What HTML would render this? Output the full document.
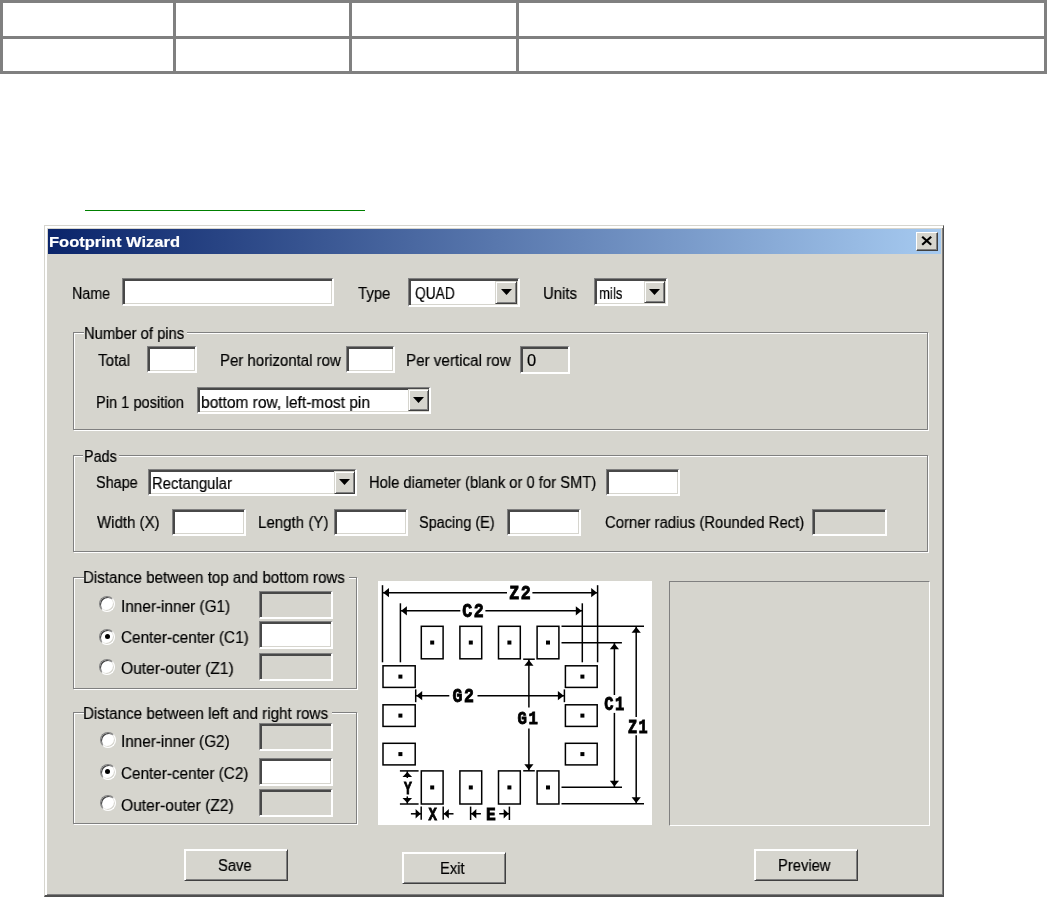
<!DOCTYPE html>
<html><head><meta charset="utf-8"><style>
html,body{margin:0;padding:0;background:#fff;width:1047px;height:897px;overflow:hidden;position:relative}
body>div,body>svg{position:absolute;box-sizing:border-box}
.frame{background:#d6d5ce;border-style:solid;border-width:1px 1px 2px 1px;border-color:#d6d5ce #505050 #505050 #d6d5ce;box-shadow:inset 2px 2px 0 #fff,inset -1px -1px 0 #808080}
.title{background:linear-gradient(to right,#0a246a,#a6caf0)}
.cbtn{background:#d6d5ce;border-style:solid;border-width:1px;border-color:#fff #404040 #404040 #fff;box-shadow:inset -1px -1px 0 #808080}
.edit{border-style:solid;border-width:1px 2px 2px 1px;border-color:#808080 #fff #fff #808080;box-shadow:inset 2px 2px 0 #484848,inset -1px -1px 0 #d6d5ce}
.dbtn{background:#d6d5ce;border-style:solid;border-width:1px;border-color:#d6d5ce #404040 #404040 #d6d5ce;box-shadow:inset 1px 1px 0 #fff,inset -1px -1px 0 #808080}
.grp{border:1px solid #808080;box-shadow:1px 1px 0 #fff,inset 1px 1px 0 #fff}
.btn{background:#d6d5ce;border-style:solid;border-width:1px;border-color:#fff #404040 #404040 #fff;box-shadow:inset 1px 1px 0 #fff,inset -1px -1px 0 #808080}
.panel{border-style:solid;border-width:1px;border-color:#808080 #fff #fff #808080}
.radio{width:16px;height:16px;border-radius:50%;background:#fff;border:1px solid;border-color:#808080 #fff #fff #808080;box-shadow:inset 1px 1px 0 #404040,inset -1px -1px 0 #d6d5ce}
.lbl{will-change:transform;-webkit-text-stroke:0.2px currentColor;font-family:"Liberation Sans",sans-serif;line-height:18px;white-space:nowrap;transform-origin:0 0}
</style></head><body>
<div style="left:0px;top:0px;width:1047px;height:3px;background:#808080"></div>
<div style="left:0px;top:71px;width:1047px;height:3px;background:#808080"></div>
<div style="left:0px;top:36px;width:1047px;height:3px;background:#808080"></div>
<div style="left:0px;top:0px;width:3px;height:74px;background:#808080"></div>
<div style="left:173px;top:0px;width:3px;height:74px;background:#808080"></div>
<div style="left:349px;top:0px;width:3px;height:74px;background:#808080"></div>
<div style="left:516px;top:0px;width:3px;height:74px;background:#808080"></div>
<div style="left:1044px;top:0px;width:3px;height:74px;background:#808080"></div>
<div style="left:85px;top:210px;width:280px;height:1px;background:#008000"></div>
<div class="frame" style="left:44px;top:225px;width:900px;height:672px"></div>
<div class="title" style="left:48px;top:229px;width:893px;height:25px"></div>
<div class="cbtn" style="left:916px;top:232px;width:22px;height:19px"><svg width="22" height="19" viewBox="0 0 22 19" style="position:absolute;left:-2px;top:-2px"><path d="M7.2 5.7 L16.2 13.7 M16.2 5.7 L7.2 13.7" stroke="#000" stroke-width="2.2" fill="none"/></svg></div>
<div class="edit" style="left:122px;top:278px;width:212px;height:28px;background:#fff"></div>
<div class="edit" style="left:408px;top:278px;width:112px;height:29px;background:#fff"></div>
<div class="dbtn" style="left:495px;top:281px;width:22px;height:23px"></div>
<svg style="left:500.5px;top:289.3px" width="11" height="6" viewBox="0 0 11 6"><path d="M0 0 H11 L5.5 6 Z" fill="#000"/></svg>
<div class="edit" style="left:594px;top:278px;width:74px;height:28px;background:#fff"></div>
<div class="dbtn" style="left:644px;top:281px;width:21px;height:22px"></div>
<svg style="left:649.0px;top:288.8px" width="11" height="6" viewBox="0 0 11 6"><path d="M0 0 H11 L5.5 6 Z" fill="#000"/></svg>
<div class="grp" style="left:73px;top:332px;width:855px;height:98px"></div>
<div class="edit" style="left:147px;top:346px;width:50px;height:27px;background:#fff"></div>
<div class="edit" style="left:346px;top:346px;width:49px;height:27px;background:#fff"></div>
<div class="edit" style="left:520px;top:346px;width:50px;height:28px;background:#d6d5ce"></div>
<div class="edit" style="left:197px;top:387px;width:234px;height:27px;background:#fff"></div>
<div class="dbtn" style="left:408px;top:389px;width:21px;height:22px"></div>
<svg style="left:413.0px;top:396.8px" width="11" height="6" viewBox="0 0 11 6"><path d="M0 0 H11 L5.5 6 Z" fill="#000"/></svg>
<div class="grp" style="left:73px;top:455px;width:855px;height:97px"></div>
<div class="edit" style="left:148px;top:469px;width:209px;height:27px;background:#fff"></div>
<div class="dbtn" style="left:334px;top:471px;width:21px;height:23px"></div>
<svg style="left:339.0px;top:479.3px" width="11" height="6" viewBox="0 0 11 6"><path d="M0 0 H11 L5.5 6 Z" fill="#000"/></svg>
<div class="edit" style="left:606px;top:469px;width:74px;height:27px;background:#fff"></div>
<div class="edit" style="left:172px;top:509px;width:74px;height:27px;background:#fff"></div>
<div class="edit" style="left:334px;top:509px;width:74px;height:27px;background:#fff"></div>
<div class="edit" style="left:507px;top:509px;width:74px;height:27px;background:#fff"></div>
<div class="edit" style="left:812px;top:509px;width:75px;height:27px;background:#d6d5ce"></div>
<div class="grp" style="left:73px;top:577px;width:284px;height:112px"></div>
<div class="radio" style="left:99.3px;top:596.4px"></div>
<div class="radio" style="left:99.3px;top:628.8px"></div>
<div style="left:104.6px;top:634.1px;width:5.4px;height:5.4px;border-radius:50%;background:#000"></div>
<div class="radio" style="left:99.3px;top:659.4px"></div>
<div class="edit" style="left:259px;top:591px;width:74px;height:28px;background:#d6d5ce"></div>
<div class="edit" style="left:259px;top:621px;width:74px;height:28px;background:#fff"></div>
<div class="edit" style="left:259px;top:653px;width:74px;height:28px;background:#d6d5ce"></div>
<div class="grp" style="left:73px;top:712px;width:284px;height:112px"></div>
<div class="radio" style="left:99.5px;top:731.8px"></div>
<div class="radio" style="left:99.5px;top:763.5px"></div>
<div style="left:104.8px;top:768.8px;width:5.4px;height:5.4px;border-radius:50%;background:#000"></div>
<div class="radio" style="left:99.5px;top:795.3px"></div>
<div class="edit" style="left:259px;top:723px;width:74px;height:28px;background:#d6d5ce"></div>
<div class="edit" style="left:259px;top:758px;width:74px;height:28px;background:#fff"></div>
<div class="edit" style="left:259px;top:789px;width:74px;height:28px;background:#d6d5ce"></div>
<div class="panel" style="left:669px;top:581px;width:261px;height:245px"></div>
<div class="btn" style="left:184px;top:849px;width:104px;height:32px"></div>
<div class="btn" style="left:402px;top:852px;width:104px;height:32px"></div>
<div class="btn" style="left:754px;top:849px;width:104px;height:32px"></div>
<svg style="left:378px;top:581px;will-change:transform" width="274" height="244" viewBox="378 581 274 244">
<rect x="378" y="581" width="274" height="244" fill="#fff"/>
<g stroke="#000" stroke-width="1.5" fill="none">
<rect x="421.3" y="626.3" width="21.80" height="32.50" fill="none"/>
<rect x="430.20" y="640.55" width="4" height="4" fill="#000" stroke="none"/>
<rect x="421.3" y="770.9" width="21.80" height="33.10" fill="none"/>
<rect x="430.20" y="785.45" width="4" height="4" fill="#000" stroke="none"/>
<rect x="459.9" y="626.3" width="21.80" height="32.50" fill="none"/>
<rect x="468.80" y="640.55" width="4" height="4" fill="#000" stroke="none"/>
<rect x="459.9" y="770.9" width="21.80" height="33.10" fill="none"/>
<rect x="468.80" y="785.45" width="4" height="4" fill="#000" stroke="none"/>
<rect x="498.5" y="626.3" width="21.80" height="32.50" fill="none"/>
<rect x="507.40" y="640.55" width="4" height="4" fill="#000" stroke="none"/>
<rect x="498.5" y="770.9" width="21.80" height="33.10" fill="none"/>
<rect x="507.40" y="785.45" width="4" height="4" fill="#000" stroke="none"/>
<rect x="537.1" y="626.3" width="21.80" height="32.50" fill="none"/>
<rect x="546.00" y="640.55" width="4" height="4" fill="#000" stroke="none"/>
<rect x="537.1" y="770.9" width="21.80" height="33.10" fill="none"/>
<rect x="546.00" y="785.45" width="4" height="4" fill="#000" stroke="none"/>
<rect x="383.0" y="665.8" width="32.20" height="21.60" fill="none"/>
<rect x="398.40" y="674.60" width="4" height="4" fill="#000" stroke="none"/>
<rect x="565.4" y="665.8" width="31.80" height="21.60" fill="none"/>
<rect x="580.40" y="674.60" width="4" height="4" fill="#000" stroke="none"/>
<rect x="383.0" y="704.8" width="32.20" height="21.60" fill="none"/>
<rect x="398.40" y="713.60" width="4" height="4" fill="#000" stroke="none"/>
<rect x="565.4" y="704.8" width="31.80" height="21.60" fill="none"/>
<rect x="580.40" y="713.60" width="4" height="4" fill="#000" stroke="none"/>
<rect x="383.0" y="743.3" width="32.20" height="21.60" fill="none"/>
<rect x="398.40" y="752.10" width="4" height="4" fill="#000" stroke="none"/>
<rect x="565.4" y="743.3" width="31.80" height="21.60" fill="none"/>
<rect x="580.40" y="752.10" width="4" height="4" fill="#000" stroke="none"/>
<line x1="382.5" y1="585.2" x2="382.5" y2="662.3"/>
<line x1="597.6" y1="585.2" x2="597.6" y2="662.3"/>
<line x1="382.5" y1="592.7" x2="507" y2="592.7"/>
<line x1="532.4" y1="592.7" x2="597.6" y2="592.7"/>
<polygon points="383.20,592.70 389.00,588.10 389.00,597.30" fill="#000" stroke="none"/>
<polygon points="597.00,592.70 591.20,588.10 591.20,597.30" fill="#000" stroke="none"/>
<line x1="400.4" y1="603.3" x2="400.4" y2="662.3"/>
<line x1="582.3" y1="603.3" x2="582.3" y2="662.3"/>
<line x1="400.4" y1="610.8" x2="460.3" y2="610.8"/>
<line x1="485.4" y1="610.8" x2="582.3" y2="610.8"/>
<polygon points="401.10,610.80 406.90,606.20 406.90,615.40" fill="#000" stroke="none"/>
<polygon points="581.60,610.80 575.80,606.20 575.80,615.40" fill="#000" stroke="none"/>
<line x1="415.7" y1="689.4" x2="415.7" y2="702.2"/>
<line x1="564.4" y1="689.4" x2="564.4" y2="702.2"/>
<line x1="415.7" y1="695.7" x2="449.3" y2="695.7"/>
<line x1="477.5" y1="695.7" x2="564.4" y2="695.7"/>
<polygon points="416.40,695.70 422.20,691.10 422.20,700.30" fill="#000" stroke="none"/>
<polygon points="563.70,695.70 557.90,691.10 557.90,700.30" fill="#000" stroke="none"/>
<line x1="523.2" y1="659.2" x2="534.8" y2="659.2"/>
<line x1="523.2" y1="770.8" x2="534.8" y2="770.8"/>
<line x1="528.9" y1="659.2" x2="528.9" y2="707.4"/>
<line x1="528.9" y1="728.5" x2="528.9" y2="770.8"/>
<polygon points="528.90,659.90 524.30,665.70 533.50,665.70" fill="#000" stroke="none"/>
<polygon points="528.90,770.10 524.30,764.30 533.50,764.30" fill="#000" stroke="none"/>
<line x1="561.5" y1="642.8" x2="621.9" y2="642.8"/>
<line x1="561.5" y1="787.3" x2="622" y2="787.3"/>
<line x1="614.4" y1="642.8" x2="614.4" y2="695"/>
<line x1="614.4" y1="712.9" x2="614.4" y2="787.3"/>
<polygon points="614.40,643.50 609.80,649.30 619.00,649.30" fill="#000" stroke="none"/>
<polygon points="614.40,786.60 609.80,780.80 619.00,780.80" fill="#000" stroke="none"/>
<line x1="561.5" y1="626.3" x2="644" y2="626.3"/>
<line x1="561.5" y1="803.8" x2="644" y2="803.8"/>
<line x1="636.2" y1="626.3" x2="636.2" y2="717"/>
<line x1="636.2" y1="735.2" x2="636.2" y2="803.8"/>
<polygon points="636.20,627.00 631.60,632.80 640.80,632.80" fill="#000" stroke="none"/>
<polygon points="636.20,803.10 631.60,797.30 640.80,797.30" fill="#000" stroke="none"/>
<line x1="399.9" y1="770.9" x2="418.6" y2="770.9"/>
<line x1="399.9" y1="804.0" x2="418.6" y2="804.0"/>
<line x1="407.3" y1="771.2" x2="407.3" y2="778"/>
<line x1="407.3" y1="796.4" x2="407.3" y2="803.8"/>
<polygon points="407.30,771.90 402.50,776.90 412.10,776.90" fill="#000" stroke="none"/>
<polygon points="407.30,803.10 402.50,798.10 412.10,798.10" fill="#000" stroke="none"/>
<line x1="421.2" y1="806.4" x2="421.2" y2="819.7"/>
<line x1="443.2" y1="806.4" x2="443.2" y2="819.7"/>
<line x1="410.9" y1="813.8" x2="421.2" y2="813.8"/>
<line x1="443.2" y1="813.8" x2="453.5" y2="813.8"/>
<polygon points="420.60,813.80 415.60,809.10 415.60,818.50" fill="#000" stroke="none"/>
<polygon points="443.80,813.80 448.80,809.10 448.80,818.50" fill="#000" stroke="none"/>
<line x1="470.6" y1="806.6" x2="470.6" y2="820"/>
<line x1="509.4" y1="806.6" x2="509.4" y2="820"/>
<line x1="470.6" y1="813.75" x2="480.9" y2="813.75"/>
<line x1="499.2" y1="813.75" x2="509.4" y2="813.75"/>
<polygon points="471.30,813.75 476.30,808.95 476.30,818.55" fill="#000" stroke="none"/>
<polygon points="508.70,813.75 503.70,808.95 503.70,818.55" fill="#000" stroke="none"/>
</g>
<g fill="#000" stroke="#000" stroke-width="0.9" font-family="Liberation Mono" font-weight="bold">
<text transform="translate(509.17,599.20) scale(0.8292,1.0000)" x="0" y="0" font-size="20" letter-spacing="2">Z2</text>
<text transform="translate(462.27,617.20) scale(0.8292,0.9769)" x="0" y="0" font-size="20" letter-spacing="2">C2</text>
<text transform="translate(452.57,702.20) scale(0.8250,0.9923)" x="0" y="0" font-size="20" letter-spacing="2">G2</text>
<text transform="translate(517.62,724.20) scale(0.7833,0.9231)" x="0" y="0" font-size="20" letter-spacing="2">G1</text>
<text transform="translate(604.23,710.30) scale(0.7708,0.9769)" x="0" y="0" font-size="20" letter-spacing="2">C1</text>
<text transform="translate(627.94,732.60) scale(0.7625,0.9769)" x="0" y="0" font-size="20" letter-spacing="2">Z1</text>
<text transform="translate(404.00,793.50) scale(0.6500,0.9462)" x="0" y="0" font-size="20" letter-spacing="0">Y</text>
<text transform="translate(428.60,819.70) scale(0.7000,0.9000)" x="0" y="0" font-size="20" letter-spacing="0">X</text>
<text transform="translate(486.09,820.00) scale(0.8100,0.9462)" x="0" y="0" font-size="20" letter-spacing="0">E</text>
</g></svg>
<div style="left:84px;top:329px;width:103px;height:6px;background:#d6d5ce"></div>
<div style="left:83px;top:452px;width:36px;height:6px;background:#d6d5ce"></div>
<div style="left:84px;top:574px;width:265px;height:6px;background:#d6d5ce"></div>
<div style="left:84px;top:709px;width:248px;height:6px;background:#d6d5ce"></div>
<div class="lbl" style="left:49.30px;top:233px;font-size:15px;font-weight:bold;color:#fff;transform:scaleX(1.1009)">Footprint Wizard</div>
<div class="lbl" style="left:71.51px;top:285px;font-size:16px;font-weight:normal;color:#000;transform:scaleX(0.8927)">Name</div>
<div class="lbl" style="left:358.40px;top:285px;font-size:16px;font-weight:normal;color:#000;transform:scaleX(0.9324)">Type</div>
<div class="lbl" style="left:543.07px;top:285px;font-size:16px;font-weight:normal;color:#000;transform:scaleX(0.9314)">Units</div>
<div class="lbl" style="left:415.24px;top:284.5px;font-size:16px;font-weight:normal;color:#000;transform:scaleX(0.8578)">QUAD</div>
<div class="lbl" style="left:598.68px;top:285px;font-size:16px;font-weight:normal;color:#000;transform:scaleX(0.8222)">mils</div>
<div class="lbl" style="left:83.58px;top:325px;font-size:16px;font-weight:normal;color:#000;transform:scaleX(0.9234)">Number of pins</div>
<div class="lbl" style="left:98.20px;top:351.5px;font-size:16px;font-weight:normal;color:#000;transform:scaleX(0.9515)">Total</div>
<div class="lbl" style="left:219.96px;top:351.5px;font-size:16px;font-weight:normal;color:#000;transform:scaleX(0.9359)">Per horizontal row</div>
<div class="lbl" style="left:406.05px;top:351.5px;font-size:16px;font-weight:normal;color:#000;transform:scaleX(0.9495)">Per vertical row</div>
<div class="lbl" style="left:526.87px;top:352px;font-size:16px;font-weight:normal;color:#000;transform:scaleX(1.0286)">0</div>
<div class="lbl" style="left:96.49px;top:393.5px;font-size:16px;font-weight:normal;color:#000;transform:scaleX(0.9138)">Pin 1 position</div>
<div class="lbl" style="left:200.93px;top:393.5px;font-size:16px;font-weight:normal;color:#000;transform:scaleX(0.9694)">bottom row, left-most pin</div>
<div class="lbl" style="left:83.50px;top:447.5px;font-size:16px;font-weight:normal;color:#000;transform:scaleX(0.9000)">Pads</div>
<div class="lbl" style="left:96.40px;top:474px;font-size:16px;font-weight:normal;color:#000;transform:scaleX(0.9022)">Shape</div>
<div class="lbl" style="left:151.57px;top:475px;font-size:16px;font-weight:normal;color:#000;transform:scaleX(0.9259)">Rectangular</div>
<div class="lbl" style="left:369.48px;top:474px;font-size:16px;font-weight:normal;color:#000;transform:scaleX(0.9224)">Hole diameter (blank or 0 for SMT)</div>
<div class="lbl" style="left:97.30px;top:514px;font-size:16px;font-weight:normal;color:#000;transform:scaleX(0.9394)">Width (X)</div>
<div class="lbl" style="left:257.76px;top:514px;font-size:16px;font-weight:normal;color:#000;transform:scaleX(0.9411)">Length (Y)</div>
<div class="lbl" style="left:419.10px;top:514px;font-size:16px;font-weight:normal;color:#000;transform:scaleX(0.9049)">Spacing (E)</div>
<div class="lbl" style="left:605.07px;top:514px;font-size:16px;font-weight:normal;color:#000;transform:scaleX(0.9296)">Corner radius (Rounded Rect)</div>
<div class="lbl" style="left:83.45px;top:568.5px;font-size:16px;font-weight:normal;color:#000;transform:scaleX(0.9469)">Distance between top and bottom rows</div>
<div class="lbl" style="left:120.84px;top:598px;font-size:16px;font-weight:normal;color:#000;transform:scaleX(0.9589)">Inner-inner (G1)</div>
<div class="lbl" style="left:120.84px;top:629px;font-size:16px;font-weight:normal;color:#000;transform:scaleX(0.9576)">Center-center (C1)</div>
<div class="lbl" style="left:120.82px;top:660px;font-size:16px;font-weight:normal;color:#000;transform:scaleX(0.9754)">Outer-outer (Z1)</div>
<div class="lbl" style="left:83.35px;top:705px;font-size:16px;font-weight:normal;color:#000;transform:scaleX(0.9502)">Distance between left and right rows</div>
<div class="lbl" style="left:121.15px;top:733px;font-size:16px;font-weight:normal;color:#000;transform:scaleX(0.9545)">Inner-inner (G2)</div>
<div class="lbl" style="left:121.14px;top:765px;font-size:16px;font-weight:normal;color:#000;transform:scaleX(0.9553)">Center-center (C2)</div>
<div class="lbl" style="left:121.12px;top:797px;font-size:16px;font-weight:normal;color:#000;transform:scaleX(0.9754)">Outer-outer (Z2)</div>
<div class="lbl" style="left:217.68px;top:857px;font-size:16px;font-weight:normal;color:#000;transform:scaleX(0.9229)">Save</div>
<div class="lbl" style="left:439.88px;top:860px;font-size:16px;font-weight:normal;color:#000;transform:scaleX(0.9192)">Exit</div>
<div class="lbl" style="left:777.88px;top:857px;font-size:16px;font-weight:normal;color:#000;transform:scaleX(0.9214)">Preview</div>
</body></html>
